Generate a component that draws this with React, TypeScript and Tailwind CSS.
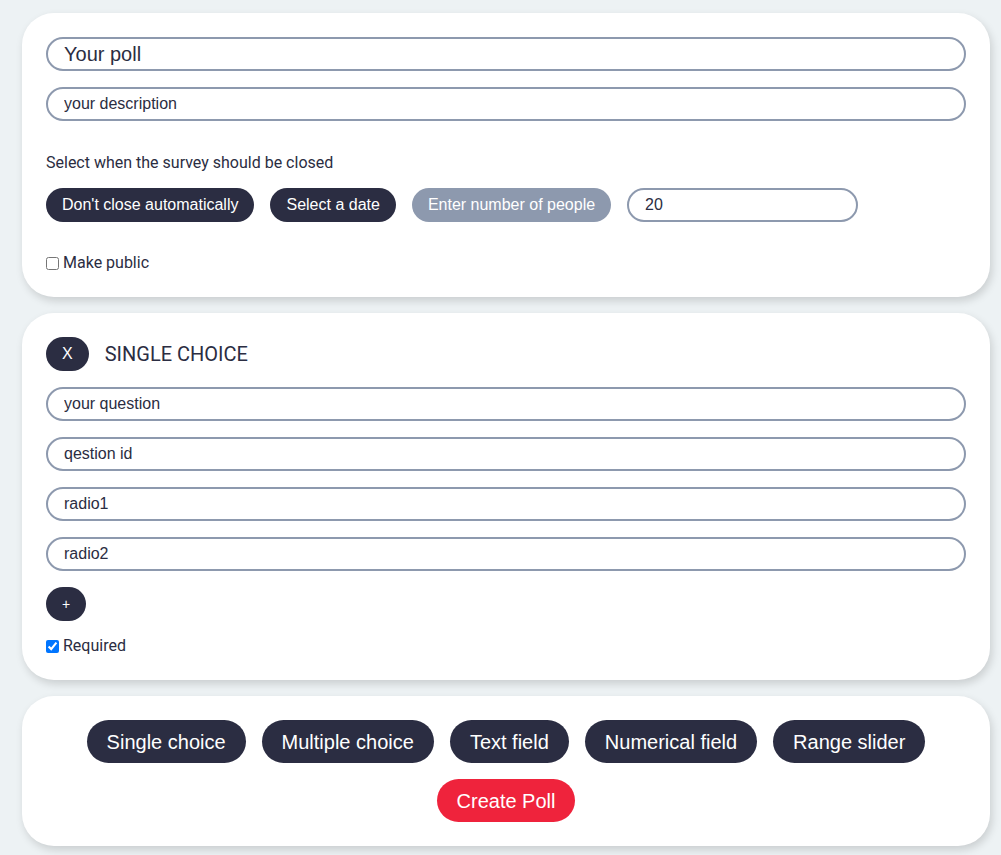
import React, { useState } from 'react';

const questionTypes = ['Single choice', 'Multiple choice', 'Text field', 'Numerical field', 'Range slider'];

export default function App() {
  const [closeMode, setCloseMode] = useState('people');
  const [isPublic, setIsPublic] = useState(false);
  const [required, setRequired] = useState(true);
  const [options, setOptions] = useState(['radio1', 'radio2']);

  const inputCls =
    "w-full h-[34px] rounded-full border-2 border-[#8d99ae] bg-white px-4 text-[16px] text-[#2b2d42] outline-none font-['Liberation_Sans',Arial,sans-serif]";
  const darkBtn =
    "rounded-full bg-[#2b2d42] px-4 h-[34px] text-[16px] text-white font-['Liberation_Sans',Arial,sans-serif] whitespace-nowrap";

  return (
    <div className="min-h-screen bg-[#edf2f4] px-[22px] pt-[13px] pb-4 font-['Roboto',sans-serif] text-[#2b2d42]">
      <div className="flex w-[968px] flex-col gap-4">
        {/* poll settings */}
        <section className="rounded-[32px] bg-white p-6 shadow-[2px_4px_8px_rgba(0,0,0,0.15)]">
          <div className="flex flex-col gap-4">
            <input className={inputCls + ' !text-[20px]'} defaultValue="Your poll" />
            <input className={inputCls} defaultValue="your description" />
          </div>
          <p className="mt-8 text-[16px] leading-5 text-[#2b2d42]">Select when the survey should be closed</p>
          <div className="mt-[15px] flex items-center gap-4">
            <button onClick={() => setCloseMode('never')} className={darkBtn}>
              Don't close automatically
            </button>
            <button onClick={() => setCloseMode('date')} className={darkBtn}>
              Select a date
            </button>
            <button
              onClick={() => setCloseMode('people')}
              className={`${darkBtn} ${closeMode === 'people' ? '!bg-[#8d99ae]' : ''}`}
            >
              Enter number of people
            </button>
            <input className={inputCls + ' !w-[231px]'} defaultValue="20" />
          </div>
          <label className="mt-[31px] flex items-center gap-[4px] text-[16px] leading-5">
            <input
              type="checkbox"
              className="h-[13px] w-[13px]"
              checked={isPublic}
              onChange={(e) => setIsPublic(e.target.checked)}
            />
            Make public
          </label>
        </section>

        {/* question */}
        <section className="rounded-[32px] bg-white p-6 shadow-[2px_4px_8px_rgba(0,0,0,0.15)]">
          <div className="flex items-center gap-4">
            <button className={darkBtn}>X</button>
            <span className="text-[20px] leading-6 text-[#2b2d42]">SINGLE CHOICE</span>
          </div>
          <div className="mt-4 flex flex-col gap-4">
            <input className={inputCls} defaultValue="your question" />
            <input className={inputCls} defaultValue="qestion id" />
            {options.map((opt, i) => (
              <input key={i} className={inputCls} defaultValue={opt} />
            ))}
          </div>
          <button
            onClick={() => setOptions([...options, 'radio' + (options.length + 1)])}
            className={darkBtn + ' mt-4 !text-[14px]'}
          >
            +
          </button>
          <label className="mt-[15px] flex items-center gap-[4px] text-[16px] leading-5">
            <input
              type="checkbox"
              className="h-[13px] w-[13px]"
              checked={required}
              onChange={(e) => setRequired(e.target.checked)}
            />
            Required
          </label>
        </section>

        {/* add question */}
        <section className="rounded-[32px] bg-white p-6 shadow-[2px_4px_8px_rgba(0,0,0,0.15)]">
          <div className="flex justify-center gap-4">
            {questionTypes.map((t) => (
              <button
                key={t}
                className="h-[43px] rounded-full bg-[#2b2d42] px-5 text-[20px] text-white font-['Liberation_Sans',Arial,sans-serif]"
              >
                {t}
              </button>
            ))}
          </div>
          <div className="mt-4 flex justify-center">
            <button className="h-[43px] rounded-full bg-[#ef233c] px-5 text-[20px] text-white font-['Liberation_Sans',Arial,sans-serif]">
              Create Poll
            </button>
          </div>
        </section>
      </div>
    </div>
  );
}
